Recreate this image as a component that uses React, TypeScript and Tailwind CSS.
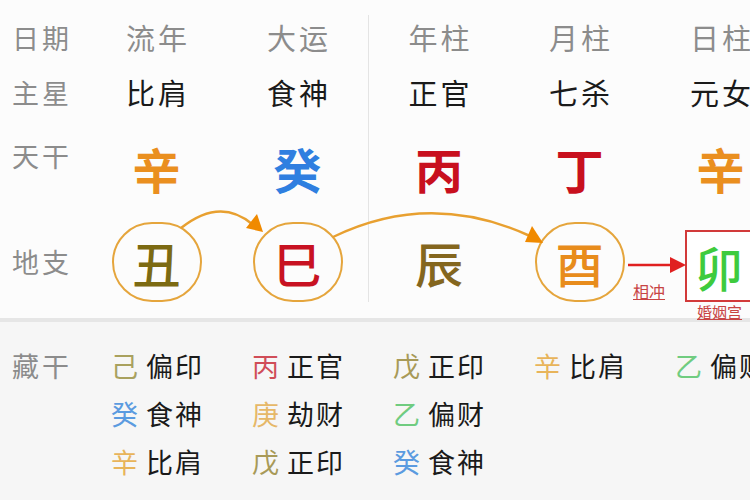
const cjk = "font-['Noto_Sans_CJK_SC','Noto_Sans',sans-serif]";

const columns = [
  { title: "流年", star: "比肩", stem: "辛", stemColor: "text-[#ea8f1f]", branch: "丑", branchColor: "text-[#7c6a12]", circle: true },
  { title: "大运", star: "食神", stem: "癸", stemColor: "text-[#2f7fe0]", branch: "巳", branchColor: "text-[#c81222]", circle: true },
  { title: "年柱", star: "正官", stem: "丙", stemColor: "text-[#c8101e]", branch: "辰", branchColor: "text-[#84661e]", circle: false },
  { title: "月柱", star: "七杀", stem: "丁", stemColor: "text-[#c8101e]", branch: "酉", branchColor: "text-[#e88c1c]", circle: true },
  { title: "日柱", star: "元女", stem: "辛", stemColor: "text-[#ea8f1f]", branch: "卯", branchColor: "text-[#3ecb3e]", circle: false },
];

const hidden = [
  [
    { s: "己", c: "text-[#a9a15e]", g: "偏印" },
    { s: "癸", c: "text-[#5b9be0]", g: "食神" },
    { s: "辛", c: "text-[#e8b45a]", g: "比肩" },
  ],
  [
    { s: "丙", c: "text-[#d04d58]", g: "正官" },
    { s: "庚", c: "text-[#e6b868]", g: "劫财" },
    { s: "戊", c: "text-[#a89a58]", g: "正印" },
  ],
  [
    { s: "戊", c: "text-[#a89a58]", g: "正印" },
    { s: "乙", c: "text-[#70cc80]", g: "偏财" },
    { s: "癸", c: "text-[#5b9be0]", g: "食神" },
  ],
  [{ s: "辛", c: "text-[#e8b45a]", g: "比肩" }],
  [{ s: "乙", c: "text-[#70cc80]", g: "偏财" }],
];

const grid = "grid grid-cols-[86px_141px_141px_141px_141px_141px]";

const Label = ({ text, className = "" }: { text: string; className?: string }) => (
  <span className={`pl-3 text-[27px] leading-none tracking-[3px] text-[#8c8c8c] ${className}`}>{text}</span>
);

const divider = (i: number) => (i === 2 ? "border-l border-[#e4e4e4]" : "");

const App = () => {
  return (
    <div className={`w-[750px] h-[500px] overflow-hidden bg-[#f6f6f6] ${cjk}`}>
      {/* 上半部分：四柱 */}
      <div className="relative h-[318px] bg-[#fcfcfc] pt-[15px]">
        <div className={`${grid} h-[45px]`}>
          <div className="flex items-center">
            <Label text="日期" />
          </div>
          {columns.map((col, i) => (
            <div key={i} className={`flex items-center justify-center ${divider(i)}`}>
              <span className="mr-[-3px] text-[29px] leading-none tracking-[3px] text-[#8c8c8c]">{col.title}</span>
            </div>
          ))}
        </div>

        <div className={`${grid} h-[64px]`}>
          <div className="flex items-center">
            <Label text="主星" />
          </div>
          {columns.map((col, i) => (
            <div key={i} className={`flex items-center justify-center ${divider(i)}`}>
              <span className="mr-[-3px] text-[29px] leading-none tracking-[3px] text-[#1a1a1a]">{col.star}</span>
            </div>
          ))}
        </div>

        <div className={`${grid} h-[88px]`}>
          <div className="flex items-center">
            <Label text="天干" className="mb-[26px]" />
          </div>
          {columns.map((col, i) => (
            <div key={i} className={`flex items-center justify-center ${divider(i)}`}>
              <span className={`text-[48px] font-bold leading-none ${col.stemColor}`}>{col.stem}</span>
            </div>
          ))}
        </div>

        <div className={`${grid} h-[90px]`}>
          <div className="flex items-center">
            <Label text="地支" className="mt-[8px]" />
          </div>
          {columns.map((col, i) => (
            <div key={i} className={`flex justify-center ${divider(i)}`}>
              {i === 4 ? (
                <div className="relative mt-[18px] ml-[-3px] flex h-[72px] w-[68px] items-center justify-center border-2 border-[#d23a3a] bg-white">
                  <span className={`text-[48px] font-medium leading-none ${col.branchColor}`}>{col.branch}</span>
                  <span className="absolute left-[10px] top-full mt-[4px] text-[15px] leading-none text-[#c84444] underline">婚姻宫</span>
                </div>
              ) : (
                <div
                  className={`mt-[10px] flex h-[80px] w-[90px] items-center justify-center rounded-full ${
                    col.circle ? "border-2 border-[#e5a53c]" : ""
                  }`}
                >
                  <span className={`text-[48px] font-medium leading-none ${col.branchColor}`}>{col.branch}</span>
                </div>
              )}
            </div>
          ))}
        </div>

        {/* 箭头连线 */}
        <svg className="pointer-events-none absolute inset-0" width="750" height="318" viewBox="0 0 750 318">
          <path d="M181 228 Q220 197 252 224" fill="none" stroke="#e8a030" strokeWidth="2.5" />
          <polygon points="263,232 246,228 257,214" fill="#f08a00" />
          <path d="M333 237 Q430 190 530 236" fill="none" stroke="#e8a030" strokeWidth="2.5" />
          <polygon points="543,243 525,242 532,226" fill="#f08a00" />
          <line x1="628" y1="265" x2="672" y2="265" stroke="#e02020" strokeWidth="2.5" />
          <polygon points="686,265 670,257 670,273" fill="#e02020" />
        </svg>
        <span className="absolute left-[633px] top-[283px] text-[16px] leading-none text-[#c84444] underline">相冲</span>
      </div>

      <div className="h-[4px] bg-[#e6e6e6]" />

      {/* 藏干 */}
      <div className={`${grid} pt-[19px]`}>
        <div className="flex h-[48px] items-center">
          <Label text="藏干" />
        </div>
        {hidden.map((cell, i) => (
          <div key={i} className="flex flex-col pl-[25px]">
            {cell.map((h, j) => (
              <div key={j} className="flex h-[48px] items-center gap-[8px] text-[27px] leading-none">
                <span className={h.c}>{h.s}</span>
                <span className="tracking-[2px] text-[#1a1a1a]">{h.g}</span>
              </div>
            ))}
          </div>
        ))}
      </div>
    </div>
  );
};

export default App;
